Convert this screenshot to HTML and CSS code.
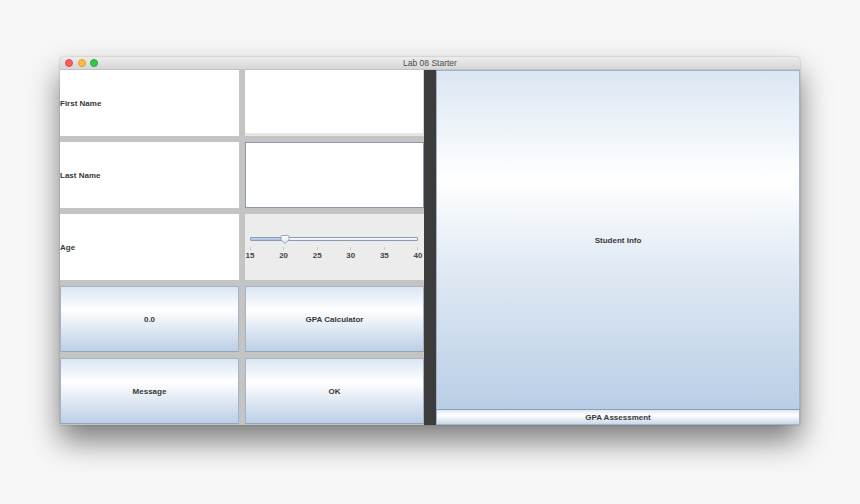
FILE: index.html
```html
<!DOCTYPE html>
<html>
<head>
<meta charset="utf-8">
<title>Lab 08 Starter</title>
<link rel="stylesheet" href="styles.css">
</head>
<body>
<div class="window">
  <div class="titlebar">
    <div class="lights">
      <span class="light red"></span>
      <span class="light yellow"></span>
      <span class="light green"></span>
    </div>
    <div class="title">Lab 08 Starter</div>
  </div>
  <div class="content">
    <div class="grid">
      <div class="cell label">First Name</div>
      <div class="cell field"></div>
      <div class="cell label">Last Name</div>
      <div class="cell field focus"></div>
      <div class="cell label">Age</div>
      <div class="cell slider-cell">
        <div class="slider">
          <div class="track"><div class="fill"></div></div>
          <svg class="thumb" width="10" height="9" viewBox="0 0 10 9">
            <defs>
              <linearGradient id="tg" x1="0" y1="0" x2="0" y2="1">
                <stop offset="0" stop-color="#ffffff"/>
                <stop offset="1" stop-color="#dbe5f2"/>
              </linearGradient>
            </defs>
            <path d="M1 1.6 Q1 0.5 2.1 0.5 H7.9 Q9 0.5 9 1.6 V5 L5 8.5 L1 5 Z" fill="url(#tg)" stroke="#8494ab" stroke-width="0.8"/>
          </svg>
        </div>
        <div class="ticks">
          <div class="tick"><i></i><span>15</span></div>
          <div class="tick"><i></i><span>20</span></div>
          <div class="tick"><i></i><span>25</span></div>
          <div class="tick"><i></i><span>30</span></div>
          <div class="tick"><i></i><span>35</span></div>
          <div class="tick"><i></i><span>40</span></div>
        </div>
      </div>
      <div class="cell btn">0.0</div>
      <div class="cell btn">GPA Calculator</div>
      <div class="cell btn">Message</div>
      <div class="cell btn">OK</div>
    </div>
    <div class="divider"></div>
    <div class="right">
      <div class="big-btn">Student Info</div>
      <div class="bar-btn">GPA Assessment</div>
    </div>
  </div>
</div>
</body>
</html>
```

FILE: styles.css
```css
html {
  margin: 0;
  padding: 0;
  background: #f7f7f7;
  height: 100%;
}
body {
  margin: 0;
  box-sizing: border-box;
  min-height: 100%;
  height: 504px;
  padding: 57px 0 0 60px;
  font-family: "Liberation Sans", Arial, sans-serif;
  overflow: hidden;
}
.window {
  width: 740px;
  height: 368px;
  background: #c4c4c4;
  border-radius: 4px 4px 0 0;
  box-shadow: 0 16px 30px rgba(0, 0, 0, 0.5), 0 0 2px rgba(0, 0, 0, 0.25);
  display: flex;
  flex-direction: column;
}
.titlebar {
  position: relative;
  height: 13px;
  background: linear-gradient(#ececec, #d6d6d6);
  border-radius: 4px 4px 0 0;
  border-bottom: 1px solid #c2c2c2;
  display: flex;
  align-items: center;
  justify-content: center;
  box-sizing: border-box;
}
.lights {
  position: absolute;
  left: 5px;
  top: 2px;
  display: flex;
  gap: 4.5px;
}
.light {
  width: 8px;
  height: 8px;
  border-radius: 50%;
  box-sizing: border-box;
}
.red { background: #fc605c; border: 0.5px solid #de4a45; }
.yellow { background: #fdbc40; border: 0.5px solid #de9f30; }
.green { background: #34c84a; border: 0.5px solid #27a83a; }
.title {
  font-size: 8.5px;
  color: #4c4c4c;
  line-height: 13px;
}
.content {
  display: flex;
  height: 355px;
}
.grid {
  width: 364px;
  display: grid;
  grid-template-columns: 179px 179px;
  grid-template-rows: repeat(5, 66px);
  gap: 6px;
  background: #c4c4c4;
  align-content: start;
}
.cell {
  box-sizing: border-box;
  display: flex;
  align-items: center;
  font-size: 8px;
  font-weight: bold;
  color: #383838;
}
.label {
  background: #fff;
}
.field {
  background: #fff;
  border-right: 1px solid #d6d6d6;
  border-bottom: 3px solid #e6e6e6;
}
.field.focus {
  border: 1px solid #8c98ab;
}
.slider-cell {
  background: #ececec;
  flex-direction: column;
  align-items: stretch;
  padding: 21px 6px 0 5px;
}
.slider {
  position: relative;
  height: 8px;
}
.track {
  position: absolute;
  left: 0;
  right: 0;
  top: 2px;
  height: 4px;
  box-sizing: border-box;
  border: 1px solid #8a9ab2;
  border-radius: 1px;
  background: linear-gradient(#ffffff, #e4ebf4);
}
.fill {
  width: 31px;
  height: 100%;
  background: linear-gradient(#c9d9ef, #a5bfe3);
}
.thumb {
  position: absolute;
  left: 29.5px;
  top: 0;
}
.ticks {
  display: flex;
  justify-content: space-between;
  margin: 4px 0 0 0;
}
.tick {
  width: 0;
  display: flex;
  flex-direction: column;
  align-items: center;
}
.tick i {
  display: block;
  width: 1px;
  height: 3px;
  background: #c8c8c8;
}
.tick span {
  display: block;
  margin-top: 1px;
  line-height: 9px;
  font-size: 8px;
  font-weight: bold;
  color: #454545;
  white-space: nowrap;
}
.btn {
  justify-content: center;
  background: linear-gradient(#dae6f3 0%, #ffffff 36%, #e3ebf5 62%, #bccfe6 100%);
  border: 1px solid #a3b2c4;
  border-bottom-color: #94a6bc;
}
.divider {
  width: 12px;
  background: #3c3c3c;
}
.right {
  flex: 1;
  display: flex;
  flex-direction: column;
  font-size: 8px;
  font-weight: bold;
  color: #383838;
}
.big-btn {
  flex: 1;
  display: flex;
  align-items: center;
  justify-content: center;
  box-sizing: border-box;
  background: linear-gradient(#dbe6f3 0%, #ffffff 32%, #e4ecf5 55%, #b9cee6 100%);
  border: 1px solid #a3b2c4;
  border-bottom: none;
}
.bar-btn {
  height: 16px;
  display: flex;
  align-items: center;
  justify-content: center;
  box-sizing: border-box;
  background: linear-gradient(#dfe8f3 0%, #ffffff 40%, #e6edf6 65%, #c9d8ea 100%);
  border: 1px solid #a3b2c4;
  border-top-color: #8d9db2;
}
```
